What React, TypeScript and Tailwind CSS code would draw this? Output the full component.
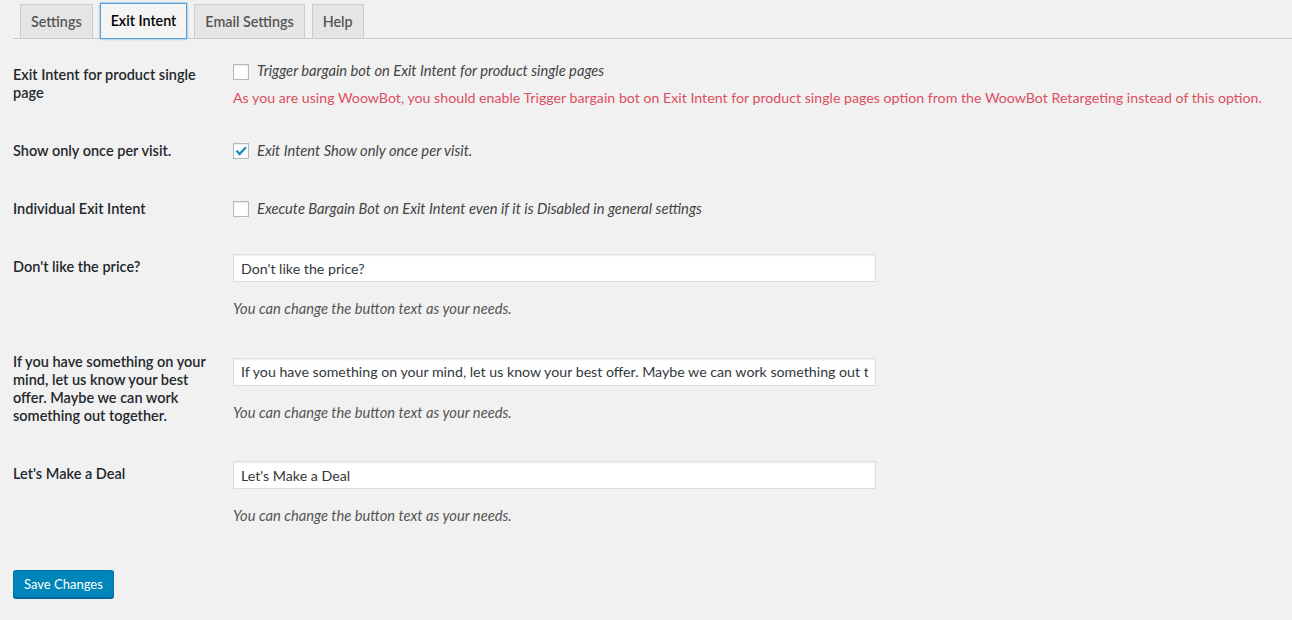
import React from "react";

const FONT = { fontFamily: "Lato, 'Segoe UI', 'Noto Sans', sans-serif" };

function Tab({ label, active }: { label: string; active?: boolean }) {
  if (active) {
    return (
      <div className="relative h-[36px] -mb-[1px] px-[10px] flex items-center bg-[#f4f4f4] border border-[#5b9dd9] shadow-[0_0_2px_rgba(30,140,190,0.8)] text-[14.3px] font-semibold text-black z-10">
        {label}
      </div>
    );
  }
  return (
    <div className="h-[34px] px-[10px] flex items-center bg-[#e5e5e5] border border-b-0 border-[#ccc] text-[14.3px] font-semibold text-[#555]">
      {label}
    </div>
  );
}

function Checkbox({ checked }: { checked?: boolean }) {
  return (
    <span className="relative inline-flex w-[16px] h-[16px] shrink-0 bg-white border border-[#b4b9be] shadow-[inset_0_1px_2px_rgba(0,0,0,0.1)]">
      {checked && (
        <svg viewBox="0 0 16 16" className="absolute left-[-1px] top-[-1px] w-[16px] h-[16px]">
          <path d="M2.6 8.4 L4.3 6.9 L6.6 9.3 L12.2 3.4 L13.8 5 L6.6 12.8 Z" fill="#1e8cbe" />
        </svg>
      )}
    </span>
  );
}

function TextInput({ value }: { value: string }) {
  return (
    <input
      type="text"
      readOnly
      value={value}
      className="block mt-[1px] w-[643px] h-[28px] px-[7px] bg-white border border-[#ddd] shadow-[inset_0_1px_2px_rgba(0,0,0,0.07)] text-[14.2px] text-[#32373c] outline-none"
      style={FONT}
    />
  );
}

function Desc() {
  return (
    <p className="mt-[16px] leading-[21px] text-[14.7px] italic text-[#555]">
      You can change the button text as your needs.
    </p>
  );
}

function Label({ lines }: { lines: string[] }) {
  return (
    <div className="w-[210px] shrink-0 pt-[20px] pb-[20px] pr-[10px] text-[14.5px] leading-[18px] font-semibold text-[#23282d]">
      {lines.map((l, i) => (
        <span key={i} className="block whitespace-nowrap">
          {l}
        </span>
      ))}
    </div>
  );
}

export default function App() {
  return (
    <div className="min-h-[620px] w-full bg-[#f1f1f1] pl-[13px]" style={FONT}>
      {/* Tabs */}
      <div className="flex items-end gap-[7px] pt-[4px] pl-[7px] border-b border-[#ccc] h-[39px]">
        <Tab label="Settings" />
        <Tab label="Exit Intent" active />
        <Tab label="Email Settings" />
        <Tab label="Help" />
      </div>

      <div className="mt-[7px]">
        {/* Row 1 */}
        <div className="flex">
          <Label lines={["Exit Intent for product single", "page"]} />
          <div className="flex-1 pt-[14px] pb-[14px] px-[10px]">
            <div className="h-[24px] flex items-center gap-[8px]">
              <Checkbox />
              <span className="text-[14.7px] italic text-[#444] -mt-[3px]">
                Trigger bargain bot on Exit Intent for product single pages
              </span>
            </div>
            <p className="mt-[3px] leading-[21px] text-[14.2px] text-[#dc4f5f] whitespace-nowrap">
              As you are using WoowBot, you should enable Trigger bargain bot on Exit Intent for product single pages option from the WoowBot Retargeting instead of this option.
            </p>
          </div>
        </div>

        {/* Row 2 */}
        <div className="flex">
          <Label lines={["Show only once per visit."]} />
          <div className="flex-1 self-center px-[10px]">
            <div className="h-[24px] flex items-center gap-[8px]">
              <Checkbox checked />
              <span className="text-[14.7px] italic text-[#444] -mt-[2px]">
                Exit Intent Show only once per visit.
              </span>
            </div>
          </div>
        </div>

        {/* Row 3 */}
        <div className="flex">
          <Label lines={["Individual Exit Intent"]} />
          <div className="flex-1 self-center px-[10px]">
            <div className="h-[24px] flex items-center gap-[8px]">
              <Checkbox />
              <span className="text-[14.7px] italic text-[#444] -mt-[2px]">
                Execute Bargain Bot on Exit Intent even if it is Disabled in general settings
              </span>
            </div>
          </div>
        </div>

        {/* Row 4 */}
        <div className="flex">
          <Label lines={["Don't like the price?"]} />
          <div className="flex-1 pt-[15px] pb-[14px] px-[10px]">
            <TextInput value="Don't like the price?" />
            <Desc />
          </div>
        </div>

        {/* Row 5 */}
        <div className="flex">
          <Label
            lines={[
              "If you have something on your",
              "mind, let us know your best",
              "offer. Maybe we can work",
              "something out together.",
            ]}
          />
          <div className="flex-1 self-center px-[10px] pt-[1px]">
            <TextInput value="If you have something on your mind, let us know your best offer. Maybe we can work something out together." />
            <Desc />
          </div>
        </div>

        {/* Row 6 */}
        <div className="flex">
          <Label lines={["Let's Make a Deal"]} />
          <div className="flex-1 pt-[15px] pb-[14px] px-[10px]">
            <TextInput value="Let's Make a Deal" />
            <Desc />
          </div>
        </div>
      </div>

      <div className="pt-[30px]">
        <button className="h-[28px] px-[10px] rounded-[3px] bg-[#0085ba] border border-[#0073aa] border-b-[#006799] shadow-[0_1px_0_#006799] text-white text-[13px] leading-[26px]" style={FONT}>
          Save Changes
        </button>
      </div>
    </div>
  );
}
